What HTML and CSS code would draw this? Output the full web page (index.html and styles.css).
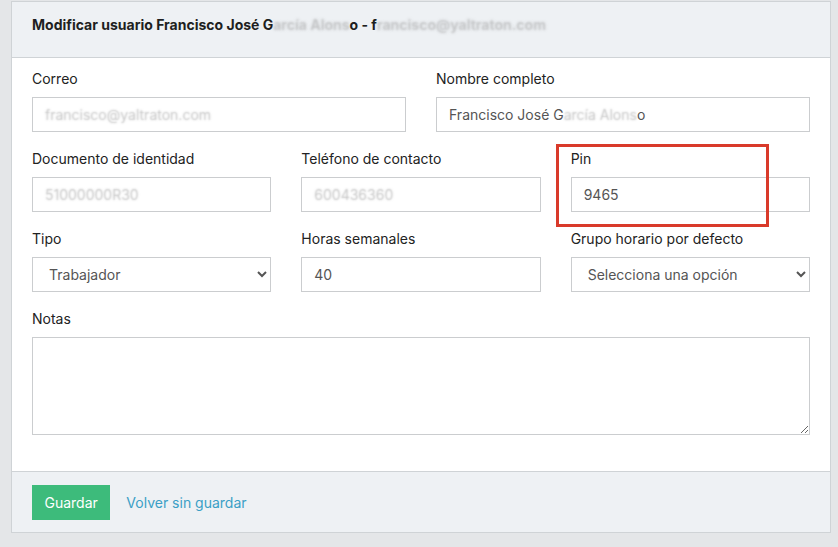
FILE: index.html
```html
<!DOCTYPE html>
<html lang="es">
<head>
<meta charset="utf-8">
<title>Modificar usuario</title>
<link rel="stylesheet" href="styles.css">
</head>
<body>
<div class="page">
  <div class="card">
    <div class="card-header">
      Modificar usuario Francisco José G<span class="blur">arcía Alons</span>o - f<span class="blur">rancisco@yaltraton.com</span>
    </div>
    <form class="card-body">
      <div class="row cols-2">
        <div class="field">
          <label>Correo</label>
          <div class="input"><span class="blur soft">francisco@yaltraton.com</span></div>
        </div>
        <div class="field">
          <label>Nombre completo</label>
          <div class="input">Francisco José G<span class="blur soft">arcía Alons</span>o</div>
        </div>
      </div>
      <div class="row cols-3">
        <div class="field">
          <label>Documento de identidad</label>
          <div class="input"><span class="blur soft">51000000R30</span></div>
        </div>
        <div class="field">
          <label>Teléfono de contacto</label>
          <div class="input"><span class="blur soft">600436360</span></div>
        </div>
        <div class="field">
          <label>Pin</label>
          <input class="input" type="text" value="9465">
        </div>
      </div>
      <div class="row cols-3">
        <div class="field">
          <label>Tipo</label>
          <select class="input select"><option>Trabajador</option></select>
        </div>
        <div class="field">
          <label>Horas semanales</label>
          <input class="input" type="text" value="40">
        </div>
        <div class="field">
          <label>Grupo horario por defecto</label>
          <select class="input select"><option>Selecciona una opción</option></select>
        </div>
      </div>
      <div class="field">
        <label>Notas</label>
        <textarea class="textarea"></textarea>
      </div>
    </form>
    <div class="card-footer">
      <button class="btn" type="button">Guardar</button>
      <a class="link" href="#">Volver sin guardar</a>
    </div>
    <div class="highlight"></div>
  </div>
</div>
</body>
</html>
```

FILE: styles.css
```css
* { box-sizing: border-box; }
html, body { margin: 0; padding: 0; }
body {
  background: #e4e6e8;
  font-family: Inter, "Noto Sans", "Liberation Sans", sans-serif;
  font-size: 14px;
  color: #222;
  height: 547px;
  overflow: hidden;
}
.page {
  padding: 1px 7px 0 11px;
}
.card {
  position: relative;
  width: 820px;
  border: 1px solid #cfd3d6;
  background: #fff;
}
.card-header {
  background: #eef1f4;
  border-bottom: 1px solid #cfd3d6;
  height: 56px;
  padding: 13px 20px 0;
  line-height: 20px;
  font-weight: 700;
  font-size: 14px;
  color: #1e1f21;
  white-space: nowrap;
}
.blur {
  color: transparent;
  text-shadow: 0 0 2.5px rgba(150,150,150,0.5);
}
.blur.soft {
  text-shadow: 0 0 2px rgba(140,140,140,0.5);
}
.card-body {
  padding: 11px 20px 36px;
  margin: 0;
}
.row {
  display: grid;
  column-gap: 30px;
}
.cols-2 { grid-template-columns: 1fr 1fr; }
.cols-3 { grid-template-columns: 1fr 1fr 1fr; }
.field {
  display: flex;
  flex-direction: column;
  margin-bottom: 17px;
}
.field:last-child { margin-bottom: 0; }
label {
  display: block;
  line-height: 20px;
  height: 20px;
  margin-bottom: 8px;
  color: #222;
  font-size: 14px;
}
.input {
  height: 35px;
  border: 1px solid #cbcdcf;
  background: #fff;
  padding: 0 12px;
  font-family: inherit;
  font-size: 14px;
  color: #555;
  display: flex;
  align-items: center;
  width: 100%;
  border-radius: 0;
  outline: none;
  white-space: nowrap;
  overflow: hidden;
}
.select {
  padding: 0 6px 0 12px;
  color: #555;
}
.textarea {
  height: 98px;
  width: 100%;
  border: 1px solid #cbcdcf;
  border-radius: 0;
  font-family: inherit;
  font-size: 14px;
  resize: vertical;
  display: block;
}
.card-footer {
  background: #eef1f4;
  border-top: 1px solid #cfd3d6;
  height: 61px;
  padding: 0 20px;
  display: flex;
  align-items: center;
  gap: 16px;
}
.btn {
  background: #3dbb7b;
  color: #fff;
  border: none;
  border-radius: 0;
  height: 35px;
  padding: 0 12.5px;
  font-family: inherit;
  font-size: 14px;
  cursor: pointer;
}
.link {
  color: #3b9fc6;
  text-decoration: none;
  font-size: 14px;
}
.highlight {
  position: absolute;
  left: 544px;
  top: 142px;
  width: 213px;
  height: 83px;
  border: 3px solid #d93a2a;
  pointer-events: none;
}
```
